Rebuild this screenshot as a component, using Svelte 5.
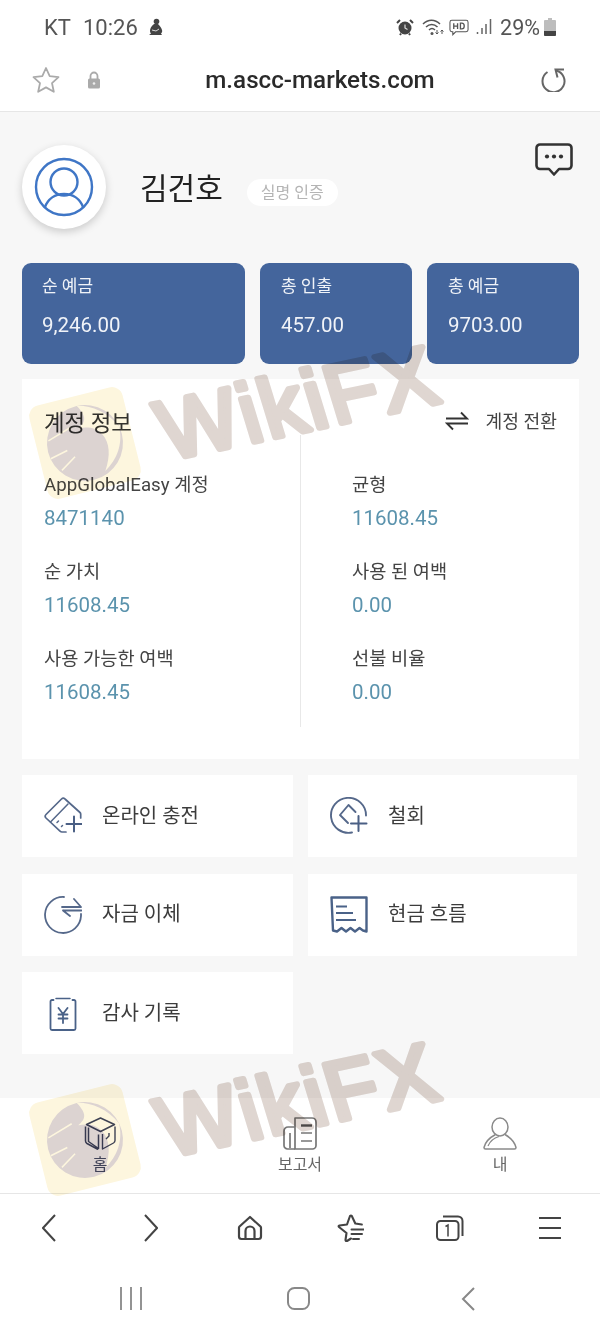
<script>
  const cards = [
    { label: '순 예금', value: '9,246.00', cls: 'wide' },
    { label: '총 인출', value: '457.00', cls: '' },
    { label: '총 예금', value: '9703.00', cls: '' }
  ];
  const left = [
    ['AppGlobalEasy 계정', '8471140'],
    ['순 가치', '11608.45'],
    ['사용 가능한 여백', '11608.45']
  ];
  const right = [
    ['균형', '11608.45'],
    ['사용 된 여백', '0.00'],
    ['선불 비율', '0.00']
  ];
  const marks = ['one', 'two'];
</script>

<div class="page">
  <header class="chrome">
    <div class="status">
      <span class="carrier">KT</span>
      <span class="time">10:26</span>
      <svg class="si" width="18" height="18" viewBox="0 0 18 18"><circle cx="9.500" cy="3.500" r="2.800" fill="#444"/><path d="M7 6c-3 2-4 5-4 7 0 1 .5 2 1 2.500L2 17h13l-1-1.500c1-1 1.500-2 1-3.500-.5-2-2-4-4-6z" fill="#444"/><path d="M5 12l4 1 3-2" stroke="#ddd" fill="none"/></svg>
      <span class="grow"></span>
      <svg class="alarm" width="18" height="18" viewBox="0 0 18 18"><circle cx="9" cy="10" r="6.500" fill="#444"/><path d="M1 5l3-3M17 5l-3-3M4 17l1-1.500M14 17l-1-1.500" stroke="#444" stroke-width="2" fill="none"/><path d="M9 6.500V10l2.500 1.500" stroke="#ddd" stroke-width="1.200" fill="none"/></svg>
      <svg class="wifi" width="23" height="18" viewBox="0 0 23 18" fill="none" stroke="#555" stroke-width="1.500"><path d="M1 6c5-5 12-5 17 0M4 9c3.500-3.500 8-3.500 11.500 0M7 12c2-2 4-2 6 0"/><circle cx="10" cy="15.500" r="1.500" fill="#555" stroke="none"/><path d="M15 12v4M13.500 14.500L15 16l1.500-1.500M20 16v-4M18.500 13.500L20 12l1.500 1.500" stroke-width="1"/></svg>
      <svg class="hd" width="20" height="18" viewBox="0 0 21 18" fill="none" stroke="#555" stroke-width="1.100"><path d="M3 2h15a2 2 0 0 1 2 2v8a2 2 0 0 1-2 2H7l-3 3v-3H3a2 2 0 0 1-2-2V4a2 2 0 0 1 2-2z"/><path d="M5 5v6M9 5v6M5 8h4M12 5v6h1.500a2.500 3 0 0 0 0-6z" stroke-width="1.400"/></svg>
      <svg class="bars" width="16" height="18" viewBox="0 0 16 18" stroke="#666" stroke-width="1.500"><path d="M1.500 16v-2M6 16v-6M10 16V6M14.500 16V1"/></svg>
      <span class="pct">29%</span>
      <svg class="batt" width="12" height="18" viewBox="0 0 12 18"><path d="M4 0h4v2h3a1 1 0 0 1 1 1v14a1 1 0 0 1-1 1H1a1 1 0 0 1-1-1V3a1 1 0 0 1 1-1h3z" fill="#bdbdbd"/><path d="M0 13h12v4a1 1 0 0 1-1 1H1a1 1 0 0 1-1-1z" fill="#444"/></svg>
    </div>
    <div class="urlbar">
      <svg width="32" height="32" viewBox="0 0 32 32" fill="none" stroke="#aaa" stroke-width="1.800" stroke-linejoin="round"><path d="M16 4l3.700 8.100 8.800 1-6.500 6 1.800 8.700L16 23.400l-7.800 4.400L10 19.100l-6.500-6 8.800-1z"/></svg>
      <svg class="lock" width="14" height="18" viewBox="0 0 14 18"><path d="M3.500 8V5a3.500 3.500 0 0 1 7 0v3" fill="none" stroke="#aaa" stroke-width="1.800"/><rect x="1" y="7.500" width="12" height="10" rx="1.500" fill="#aaa"/><circle cx="7" cy="12.500" r="1.300" fill="#eee"/></svg>
      <span class="url">m.ascc-markets.com</span>
      <svg class="reload" width="26" height="24" viewBox="0 0 26 24" fill="none" stroke="#666" stroke-width="2"><path d="M6.500 4A11 11 0 1 0 15 2.500"/><path d="M23 1.500H14.500L16.500 9.500"/></svg>
    </div>
  </header>

  <main class="content">
    <section class="profile">
      <div class="avatar">
        <svg width="60" height="60" viewBox="0 0 60 60" fill="none" stroke="#3f76c6" stroke-width="2.400"><circle cx="30" cy="30" r="28"/><circle cx="30" cy="25" r="13.500"/><path d="M11 50c3-8 10-13 19-13s16 5 19 13"/></svg>
      </div>
      <h1>김건호</h1>
      <span class="verified">실명 인증</span>
      <svg class="chat" width="38" height="33" viewBox="0 0 38 33"><path d="M5 1.500h28a3.500 3.500 0 0 1 3.500 3.500v17.500a3.500 3.500 0 0 1-3.500 3.500h-9l-5 5.500-5-5.500H5a3.500 3.500 0 0 1-3.500-3.500V5A3.500 3.500 0 0 1 5 1.500z" fill="none" stroke="#333" stroke-width="2.600" stroke-linejoin="round"/><circle cx="12" cy="13.500" r="2.100" fill="#333"/><circle cx="19" cy="13.500" r="2.100" fill="#333"/><circle cx="26" cy="13.500" r="2.100" fill="#333"/></svg>
    </section>

    <section class="cards">
      {#each cards as c}
        <div class="card {c.cls}">
          <div class="card-label">{c.label}</div>
          <div class="card-value">{c.value}</div>
        </div>
      {/each}
    </section>

    <section class="panel">
      <div class="divider"></div>
      <div class="panel-head">
        <h2>계정 정보</h2>
        <svg class="swap" width="24" height="20" viewBox="0 0 24 20" fill="none" stroke="#333" stroke-width="1.900"><path d="M1 7.500h21l-6-6M23 12.500H2l6 6"/></svg>
        <span class="switch">계정 전환</span>
      </div>
      <div class="columns">
        <div class="col">
          {#each left as [k, v]}
            <div class="item"><div class="k">{k}</div><div class="v">{v}</div></div>
          {/each}
        </div>
        <div class="col">
          {#each right as [k, v]}
            <div class="item"><div class="k">{k}</div><div class="v">{v}</div></div>
          {/each}
        </div>
      </div>
    </section>

    <section class="actions">
      <div class="action">
        <svg width="38" height="38" viewBox="0 0 38 38" fill="none" stroke="#55688a" stroke-width="1.700" stroke-linejoin="round" stroke-linecap="round"><path d="M22 35h-4a3 3 0 0 1-2-.8L2 21a2.500 2.500 0 0 1 0-3.500L17.500 2a2.500 2.500 0 0 1 3.500 0l15 13.500a2 2 0 0 1 .7 1.500v4"/><path d="M6.500 25L24 7" stroke-width="1.500"/><path d="M13 25.500l1.500-1.500M17.500 29.500l1-1" stroke-width="1.500"/><path d="M30 19.500v15M22.500 27h15" stroke="#4a5f84" stroke-width="2"/></svg>
        <span>온라인 충전</span>
      </div>
      <div class="action second">
        <svg width="38" height="38" viewBox="0 0 38 38" fill="none" stroke="#55688a" stroke-width="1.900" stroke-linejoin="round" stroke-linecap="round"><path d="M36 18.500a17.500 17.500 0 1 0-14 17"/><path d="M25.500 15L18.500 8 10 18l8 8"/><path d="M28.500 19v15M21 26.500h15.500" stroke="#4a5f84" stroke-width="2"/></svg>
        <span>철회</span>
      </div>
      <div class="action">
        <svg width="38" height="38" viewBox="0 0 38 38" fill="none" stroke="#55688a" stroke-width="1.800" stroke-linejoin="round" stroke-linecap="round"><path d="M20 1a18 18 0 1 0 17 19v-2"/><path d="M30 3l7 8H18M19 14.500h18.500M19 14.500l7 5.500"/></svg>
        <span>자금 이체</span>
      </div>
      <div class="action second">
        <svg width="38" height="38" viewBox="0 0 38 38" fill="none" stroke="#4a6288" stroke-width="2.400" stroke-linejoin="round"><path d="M1.500 1.500h35v34l-3.500-1-3.500-2.500-4.500 3.500-4.500-3.500-4.500 3.500-4.500-3.500-4.500 3.500-4-1z"/><path d="M6 10.500h11M6 17h17M6 24h20" stroke-width="1.800"/></svg>
        <span>현금 흐름</span>
      </div>
      <div class="action">
        <svg width="38" height="38" viewBox="0 0 38 38" fill="none" stroke="#4a6288" stroke-width="1.800" stroke-linejoin="round" stroke-linecap="round"><path d="M9.500 6H8a1.500 1.500 0 0 0-1.500 1.500v27A1.500 1.500 0 0 0 8 36h22a1.500 1.500 0 0 0 1.500-1.500v-27A1.500 1.500 0 0 0 30 6h-1.500"/><path d="M12 4.500h14" stroke-width="1.500"/><path d="M14.500 14l4.500 6 4.500-6M19 20v9M14.500 20.500h9M14.500 24.500h9" stroke-width="1.800"/></svg>
        <span>감사 기록</span>
      </div>
    </section>
  </main>

  <nav class="tabs">
    <div class="tab home">
      <svg width="33" height="33" viewBox="0 0 33 33" fill="none" stroke="#3f4560" stroke-width="1.500" stroke-linejoin="round"><path d="M16.500 1l14 6.500-14 7-14-7z"/><path d="M4.500 10.500v14l10 7V17.500M1.500 9.500v14.500a3 3 0 0 0 1.500 2.500l11 6"/><path d="M18.500 17v15l11-6a3 3 0 0 0 1.500-2.500V9.500M22 22l3-3v-3" stroke-width="1.400"/></svg>
      <span>홈</span>
    </div>
    <div class="tab">
      <svg width="34" height="33" viewBox="0 0 34 33" fill="none" stroke="#777" stroke-width="1.700" stroke-linejoin="round"><path d="M12 1h17a4 4 0 0 1 4 4v23.500a3.500 3.500 0 0 1-3.500 3.500H12z"/><path d="M12 10H5a4 4 0 0 0-4 4v14.500A3.500 3.500 0 0 0 4.500 32H12M7 16v15"/><path d="M18 8.500h11" stroke="#555" stroke-width="2.400"/><path d="M18 16h11M18 24h11"/></svg>
      <span>보고서</span>
    </div>
    <div class="tab">
      <svg width="34" height="33" viewBox="0 0 34 33" fill="none" stroke="#8a8a8a" stroke-width="1.500" stroke-linejoin="round"><ellipse cx="17" cy="10" rx="8" ry="9"/><path d="M12.500 17.500C6 21 2 26 1 30.500a1.500 1.500 0 0 0 1.500 1.500h29a1.500 1.500 0 0 0 1.500-1.500C32 26 28 21 22 17.500"/><path d="M5 29c2-5 6-8 11-9.500" stroke-width="1.200"/></svg>
      <span>내</span>
    </div>
  </nav>

  <nav class="browser">
    <svg class="back" width="16" height="28" viewBox="0 0 16 28" fill="none" stroke="#444" stroke-width="2"><path d="M13 1L1 14l12 13"/></svg>
    <svg class="fwd" width="16" height="28" viewBox="0 0 16 28" fill="none" stroke="#444" stroke-width="2"><path d="M3 1l12 13L3 27"/></svg>
    <svg width="26" height="26" viewBox="0 0 26 26" fill="none" stroke="#444" stroke-width="2.200" stroke-linejoin="round"><path d="M13 2L2.500 11.500a2 2 0 0 0-.5 1.500v8.500a2.500 2.500 0 0 0 2.500 2.500h17a2.500 2.500 0 0 0 2.500-2.500V13a2 2 0 0 0-.5-1.500z"/><path d="M8.500 24v-8a4.500 4.500 0 0 1 9 0v8"/></svg>
    <svg width="28" height="28" viewBox="0 0 28 28" fill="none" stroke="#444" stroke-width="2.100" stroke-linejoin="round" stroke-linecap="round"><path d="M15 24.500l-4 2.500q-1.500.5-1.500-1l1-7-7.500-6q-1-1 .5-1.500l7.500-1L14 2q1-1 1.800 0l3.500 7.500 6.500 1"/><path d="M15.500 15.500H28M15.500 20H26M17 25h6" stroke-width="2"/></svg>
    <svg width="28" height="26" viewBox="0 0 28 26" fill="none" stroke="#444" stroke-width="2"><rect x="1" y="6" width="21.500" height="19" rx="3.500"/><path d="M7 1.500h15a4.500 4.500 0 0 1 4.500 4.500v15"/><path d="M9.500 11.500l2.500-1.500v11.500" stroke-width="1.500"/></svg>
    <svg width="24" height="24" viewBox="0 0 24 24" stroke="#444" stroke-width="2"><path d="M1 2h22M1 12h22M1 22h22"/></svg>
  </nav>

  <nav class="system">
    <svg width="22" height="23" viewBox="0 0 22 23" stroke="#888" stroke-width="1.800"><path d="M1 0v23M11 0v23M21 0v23"/></svg>
    <svg class="sys-home" width="23" height="23" viewBox="0 0 23 23" fill="none" stroke="#888" stroke-width="2"><rect x="1" y="1" width="21" height="21" rx="6.500"/></svg>
    <svg class="sys-back" width="14" height="24" viewBox="0 0 14 24" fill="none" stroke="#888" stroke-width="2"><path d="M13 1L2 12l11 11"/></svg>
  </nav>

  {#each marks as m}
    <svg class="mark {m}" width="440" height="170" viewBox="0 0 440 170">
      <g transform="rotate(-14 65 103)">
        <rect x="17" y="55" width="96" height="96" rx="11" fill="#fdf6de"/>
        <circle cx="65" cy="103" r="38" fill="#dcd3d1"/>
        <path d="M66 65c14 3 28 13 36 30 0 18-10 32-24 40 9-14 11-26 6-36-5-9-12-11-22-12 8-4 12-8 4-22z" fill="#fdf6de"/>
        <path d="M30 92l26-8M28 110l18-4M36 124l16-10" stroke="#fdf6de" stroke-width="1.500" fill="none"/>
      </g>
      <text class="wm" x="0" y="0" transform="translate(148 120) rotate(-12) skewX(5)">WikiFX</text>
    </svg>
  {/each}
</div>

<style>
  :global(body) { margin: 0; background: #fff; }
  .page {
    position: relative;
    width: 600px;
    height: 1333px;
    overflow: hidden;
    background: #f7f7f7;
    font-family: Roboto, "Noto Sans CJK KR", sans-serif;
    color: #333;
  }
  svg { display: block; flex: none; }
  .chrome { background: #fff; height: 112px; box-sizing: border-box; border-bottom: 1px solid #e6e6e6; }
  .status { display: flex; align-items: center; height: 54px; padding: 0 44px; font-size: 22px; color: #555; }
  .carrier { width: 39px; }
  .time { width: 64px; }
  .grow { flex: 1; }
  .wifi { margin-left: 8px; }
  .hd { margin-left: 4px; }
  .bars { margin-left: 7px; }
  .pct { margin-left: 8px; font-size: 21.500px; }
  .batt { margin-left: 4px; }
  .urlbar { display: flex; align-items: center; height: 51px; padding: 0 33px 0 30px; }
  .lock { margin-left: 25px; }
  .url { flex: 1; padding-right: 2px; text-align: center; font-size: 24.200px; font-weight: 500; color: #2a2a2a; }
  .content { height: 986px; box-sizing: border-box; padding: 0 21px 0 22px; }
  .profile { position: relative; display: flex; align-items: center; height: 151px; }
  .avatar {
    display: flex; align-items: center; justify-content: center;
    width: 84px; height: 84px; margin-top: -1px; border-radius: 50%;
    background: #fff; box-shadow: 0 3px 8px rgba(0, 0, 0, .18);
  }
  h1 { margin: -4px 0 0 34px; font-size: 30px; font-weight: 400; color: #222; }
  .verified {
    margin: 10px 0 0 24px; padding: 4px 14px; border-radius: 14px;
    background: #fff; font-size: 16px; line-height: 19px; color: #b4b4b4;
  }
  .chat { position: absolute; top: 31px; right: 6px; }
  .cards { display: flex; gap: 15px; }
  .card {
    box-sizing: border-box; width: 152px; height: 101px; padding: 13px 21px; flex: none;
    border-radius: 9px; background: #44659c; color: #f0f3f8;
  }
  .card.wide { width: 223px; padding-left: 20px; }
  .card-label { font-size: 17px; line-height: 20px; }
  .card-value { margin-top: 18px; font-size: 20.500px; line-height: 23px; }
  .panel { position: relative; height: 380px; margin-top: 15px; background: #fff; }
  .divider { position: absolute; left: 278px; top: 56px; width: 1px; height: 292px; background: #e8e8e8; }
  .panel-head { display: flex; align-items: center; height: 86px; padding: 0 22px; }
  h2 { flex: 1; margin: 0 0 2px; font-size: 22.400px; font-weight: 400; color: #333; }
  .swap { margin-bottom: 2px; }
  .switch { margin: 0 0 4px 17px; font-size: 18.200px; color: #444; }
  .columns { display: flex; padding-top: 8px; }
  .col { width: 308px; padding-left: 22px; box-sizing: border-box; }
  .col + .col { width: 249px; }
  .item { height: 87px; }
  .k { font-size: 18.700px; line-height: 24px; color: #444; }
  .v { margin-top: 9px; font-size: 20.500px; line-height: 24px; color: #5b93ad; }
  .actions { display: grid; grid-template-columns: 271px 269px; column-gap: 15px; row-gap: 16.500px; margin-top: 16px; }
  .action { display: flex; align-items: center; gap: 20px; height: 82px; padding-left: 22px; background: #fff; font-size: 20px; color: #3c3c3c; }
  .action span { margin-top: -4px; }
  .tabs { display: flex; height: 95px; background: #fff; border-bottom: 1px solid #e6e6e6; }
  .tab { flex: 1; display: flex; flex-direction: column; align-items: center; padding-top: 19px; font-size: 16px; line-height: 20px; color: #666; }
  .tab.home { color: #4a4f6a; }
  .tab span { margin-top: 5px; }
  .browser { display: grid; grid-template-columns: repeat(6, 100px); justify-items: center; align-items: center; height: 70px; padding-bottom: 2px; box-sizing: border-box; background: #fff; }
  .system { display: flex; align-items: center; background: #fff; height: 69px; padding-left: 120px; }
  .sys-home { margin-left: 145px; }
  .sys-back { margin-left: 151px; }
  .mark { position: absolute; left: 20px; overflow: visible; pointer-events: none; mix-blend-mode: multiply; }
  .mark.one { top: 340px; }
  .mark.two { top: 1037px; }
  .wm {
    font-family: "Liberation Sans", sans-serif; font-size: 84px; font-weight: 400; letter-spacing: 3px;
    fill: #dfd6d1; stroke: #dfd6d1; stroke-width: 6px; stroke-linejoin: round; stroke-linecap: round;
  }
</style>
